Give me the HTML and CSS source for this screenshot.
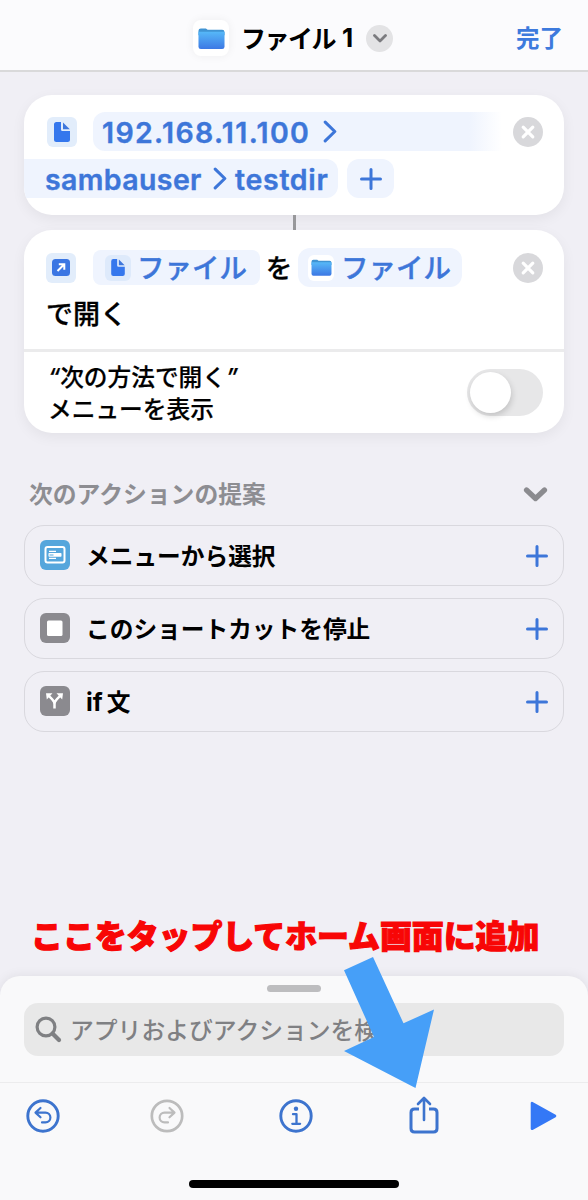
FILE: index.html
```html
<!DOCTYPE html>
<html lang="ja">
<head>
<meta charset="utf-8">
<title>ファイル 1</title>
<link rel="stylesheet" href="styles.css">
</head>
<body>
<svg class="defs" width="0" height="0" aria-hidden="true">
  <defs>
    <linearGradient id="folder-fill" x1="0" y1="0" x2="0" y2="1">
      <stop offset="0" stop-color="#56b8f8"/><stop offset="1" stop-color="#3d78e4"/>
    </linearGradient>
    <symbol id="folder" viewBox="0 0 28 23">
      <path d="M.5 3.500Q.5 1 3 1h5.200l1.800 1.500h15q2.500 0 2.500 2.500V8H.5z" fill="#4094d3"/>
      <path d="M.5 4.500h27V20q0 2.500-2.500 2.500H3Q.5 22.500.5 20z" fill="url(#folder-fill)"/>
    </symbol>
    <symbol id="doc" viewBox="0 0 16 20">
      <path d="M2.500 0H7v7.500Q7 9 8.500 9H16v8.500q0 2.500-2.500 2.500h-11Q0 20 0 17.500v-15Q0 0 2.500 0z" fill="#3577ed"/>
      <path d="M9 .5 15.800 7.300H9z" fill="#3e77dc"/>
    </symbol>
    <symbol id="close" viewBox="0 0 30 30">
      <circle cx="15" cy="15" r="15" fill="#d8d8db"/>
      <path d="M10.200 10.200l9.600 9.600m0-9.600-9.600 9.600" stroke="#fff" stroke-width="3.200" stroke-linecap="round"/>
    </symbol>
    <symbol id="plus" viewBox="0 0 22 22">
      <path d="M11 1.500v19M1.500 11h19" stroke="#3d76d9" stroke-width="3" stroke-linecap="round"/>
    </symbol>
    <symbol id="gt" viewBox="0 0 14 24">
      <path d="M2 2.200l10 9.800L2 21.800" fill="none" stroke="#3d76d9" stroke-width="3.200" stroke-linecap="round" stroke-linejoin="round"/>
    </symbol>
  </defs>
</svg>

<div class="screen">
  <header class="header">
    <div class="header-title">
      <span class="app-icon"><svg width="27" height="23"><use href="#folder"/></svg></span>
      <h1 class="title">ファイル<span class="title-num">1</span></h1>
      <span class="title-menu"><svg width="14" height="9" viewBox="0 0 14 9"><path d="M1.500 1.500 7 7l5.500-5.500" fill="none" stroke="#7b7b7f" stroke-width="2.800" stroke-linecap="round" stroke-linejoin="round"/></svg></span>
    </div>
    <a class="done">完了</a>
  </header>

  <main class="editor">
    <section class="card path-card">
      <div class="path-row">
        <span class="tile"><svg width="16" height="20"><use href="#doc"/></svg></span>
        <span class="chip chip-open"><span class="latin ip">192.168.11.100</span><svg width="14" height="23"><use href="#gt"/></svg></span>
        <svg class="close" width="30" height="30"><use href="#close"/></svg>
      </div>
      <div class="path-row second">
        <span class="chip chip-end"><span class="latin user">sambauser</span><svg width="14" height="23"><use href="#gt"/></svg><span class="latin dir">testdir</span></span>
        <span class="chip chip-plus"><svg width="22" height="22"><use href="#plus"/></svg></span>
      </div>
    </section>
    <div class="connector"></div>
    <section class="card open-card">
      <div class="open-row">
        <span class="tile"><svg width="18" height="17" viewBox="0 0 18 17"><rect width="18" height="17" rx="3.500" fill="#3b76e3"/><path d="M5.500 12 11.500 6M6.800 5.200h5.500v5.500" fill="none" stroke="#fff" stroke-width="2"/></svg></span>
        <span class="chip chip-file"><span class="mini mini-doc"><svg width="14" height="17"><use href="#doc"/></svg></span><span class="var">ファイル</span></span>
        <span class="particle">を</span>
        <span class="chip chip-app"><span class="mini mini-app"><svg width="21" height="17"><use href="#folder"/></svg></span><span class="var">ファイル</span></span>
        <svg class="close" width="30" height="30"><use href="#close"/></svg>
      </div>
      <div class="open-tail">で開く</div>
      <div class="option">
        <p class="option-label"><span class="quote">“</span>次の方法で開く<span class="quote">”</span><br>メニューを表示</p>
        <span class="toggle"><span class="knob"></span></span>
      </div>
    </section>

    <div class="suggest-head">
      <h2 class="suggest-title">次のアクションの提案</h2>
      <svg width="25" height="17" viewBox="0 0 25 17"><path d="M3.500 5 12.500 13.500 21.500 5" fill="none" stroke="#8b8b8f" stroke-width="5.200" stroke-linecap="round" stroke-linejoin="round"/></svg>
    </div>
    <ul class="suggestions">
      <li class="suggestion">
        <svg width="30" height="30" viewBox="0 0 30 30"><rect width="30" height="30" rx="6" fill="#55a6dc"/><rect x="5.500" y="7" width="19" height="15.500" rx="2" fill="none" stroke="#fff" stroke-width="2"/><path d="M9 11.300h7M9 18.300h7" stroke="#fff" stroke-width="1.200"/><rect x="8.500" y="13" width="13" height="3.800" rx=".8" fill="#fff"/><path d="M9.500 15h4" stroke="#55a6dc" stroke-width="1"/></svg>
        <span class="suggestion-name">メニューから選択</span>
        <svg class="add" width="22" height="22"><use href="#plus"/></svg>
      </li>
      <li class="suggestion">
        <svg width="30" height="30" viewBox="0 0 30 30"><rect width="30" height="30" rx="6" fill="#8b8a8f"/><rect x="7" y="7.500" width="15.500" height="15.500" rx="1.500" fill="#fff"/></svg>
        <span class="suggestion-name">このショートカットを停止</span>
        <svg class="add" width="22" height="22"><use href="#plus"/></svg>
      </li>
      <li class="suggestion">
        <svg width="30" height="30" viewBox="0 0 30 30"><rect width="30" height="30" rx="6" fill="#8b8a8f"/><path d="M14.500 22.500V18q0-2.500-2-4.300L9 10m5.500 8q0-2.500 2-4.300L20 10" fill="none" stroke="#fff" stroke-width="2.500"/><path d="M6 7.200h6.500l-5.700 6.300zM23 7.200h-6.500l5.700 6.300z" fill="#fff"/></svg>
        <span class="suggestion-name"><span class="if">if</span>文</span>
        <svg class="add" width="22" height="22"><use href="#plus"/></svg>
      </li>
    </ul>
    <p class="callout">ここをタップしてホーム画面に追加</p>
  </main>

  <section class="sheet">
    <div class="grabber"></div>
    <div class="search">
      <svg width="27" height="27" viewBox="0 0 27 27"><circle cx="11" cy="11" r="8.900" fill="none" stroke="#7f8083" stroke-width="3.200"/><path d="M17.500 17.500 24 24" stroke="#7f8083" stroke-width="4.200" stroke-linecap="round"/></svg>
      <span class="placeholder">アプリおよびアクションを検索</span>
    </div>
  </section>
  <nav class="toolbar">
    <svg class="undo" width="34" height="34" viewBox="0 0 34 34" fill="none" stroke="#3d74ce" stroke-linecap="round" stroke-linejoin="round"><circle cx="17" cy="17" r="15.200" stroke-width="2.900"/><path d="M14.500 9 9.500 13.600l5 4.700M10 13.600h9.500a4.900 4.900 0 0 1 0 9.800H16" stroke-width="2.200"/></svg>
    <svg class="redo" width="34" height="34" viewBox="0 0 34 34" fill="none" stroke="#bcbcbc" stroke-linecap="round" stroke-linejoin="round"><circle cx="17" cy="17" r="15.200" stroke-width="2.700"/><path d="M19.500 9l5 4.600-5 4.700M24 13.600h-9.500a4.900 4.900 0 0 0 0 9.800H18" stroke-width="2.200"/></svg>
    <svg class="info" width="34" height="34" viewBox="0 0 34 34" fill="none" stroke="#3d74ce" stroke-linecap="round" stroke-linejoin="round"><circle cx="17" cy="17" r="15.200" stroke-width="2.900"/><circle cx="17" cy="9.800" r="2.200" fill="#3d74ce" stroke="none"/><path d="M14 15.200h3.500v9.500M13.300 24.800h7.800" stroke-width="2.300"/></svg>
    <svg class="share" width="30" height="38" viewBox="0 0 30 38" fill="none" stroke="#3d74ce" stroke-linecap="round" stroke-linejoin="round"><path d="M10 13H5.500Q2 13 2 16.500v16Q2 36 5.500 36h19q3.500 0 3.500-3.500v-16Q28 13 24.500 13H20" stroke-width="3" stroke-linecap="butt"/><path d="M15 24V2.500M9 8l6-6 6 6" stroke-width="2.600"/></svg>
    <svg class="play" width="27" height="30" viewBox="0 0 27 30"><path d="M2 2.200v25.600L25 15z" fill="#3478f6" stroke="#3478f6" stroke-width="2.600" stroke-linejoin="round"/></svg>
  </nav>
  <div class="home"><span class="home-bar"></span></div>
  <svg class="pointer" width="90" height="131" viewBox="0 0 90 131"><path d="M0 13.300 29 0 59.500 66.300 90 52.500 71.500 131 0 94 30 80z" fill="#469ff8"/></svg>
</div>
</body>
</html>
```

FILE: styles.css
```css
* { box-sizing: border-box; }
body {
  margin: 0;
  font-family: Inter, "Noto Sans CJK JP", sans-serif;
  color: #000;
  background: #f0eff5;
}
h1, h2, p, ul { margin: 0; padding: 0; }
svg { display: block; flex: none; }
.defs { position: absolute; }
.screen {
  position: relative;
  display: flex;
  flex-direction: column;
  width: 588px;
  height: 1200px;
  overflow: hidden;
  background: #f0eff5;
  white-space: nowrap;
}

.header {
  display: flex;
  justify-content: space-between;
  height: 72px;
  flex: none;
  padding: 20px 25px 0 193px;
  background: #fbfbfd;
  border-bottom: 2px solid #d9d9da;
}
.header-title { display: flex; height: 36px; align-items: center; }
.app-icon {
  display: grid;
  place-items: center;
  width: 36px;
  height: 36px;
  border-radius: 8px;
  background: #fff;
  box-shadow: 0 0 10px rgba(0, 0, 0, .06);
}
.title { display: flex; margin: -1px 0 0 12px; width: 125px; font: 700 25px/36px "Noto Sans CJK JP", sans-serif; letter-spacing: -1.500px; }
.title-num { margin: 1px 0 0 7px; font-family: Inter, sans-serif; font-size: 26px; letter-spacing: 0; }
.title-menu { display: grid; place-items: center; width: 27px; height: 27px; border-radius: 50%; background: #e3e3e5; }
.done { margin-top: -1px; font: 700 23.500px/36px "Noto Sans CJK JP", sans-serif; color: #3d7add; }

.editor { height: 904px; flex: none; padding: 23px 24px 0; }
.card { background: #fff; border-radius: 28px; box-shadow: 0 4px 14px rgba(0, 0, 0, .06); overflow: hidden; }
.path-card { height: 120px; padding-top: 17px; }
.path-row { display: flex; align-items: center; height: 39px; padding: 0 21px 0 23px; }
.path-row.second { margin-top: 8px; padding: 0; }
.tile { display: grid; place-items: center; width: 30px; height: 30px; border-radius: 6px; background: #e2edfb; }
.close { margin-left: auto; }
.chip { display: flex; align-items: center; height: 39px; background: #eff4fe; color: #3d76d9; }
.chip-open { width: 409px; margin-left: 16px; padding-left: 9px; border-radius: 12px 0 0 12px; background: linear-gradient(90deg, #eff4fe 92%, #fff); }
.latin { flex: none; margin-top: 2px; font: 600 28.500px/39px Inter, sans-serif; -webkit-text-stroke: .4px; }
.ip { width: 221px; letter-spacing: 1.350px; }
.chip-end { width: 314px; padding-left: 21px; border-radius: 0 12px 12px 0; }
.user { width: 168px; letter-spacing: .38px; }
.dir { margin-left: 8px; letter-spacing: .7px; }
.chip-plus { width: 47px; margin-left: 9px; justify-content: center; border-radius: 12px; }
.connector { width: 3px; height: 15px; margin-left: 269px; background: #98989b; }

.open-card { height: 203px; }
.open-row { display: flex; align-items: center; height: 39px; margin-top: 18px; padding: 0 21px 0 22px; }
.chip-file { width: 167px; height: 35px; margin-left: 17px; padding-left: 12px; border-radius: 8px; }
.chip-app { width: 164px; padding-left: 10px; border-radius: 12px; }
.mini { display: grid; place-items: center; width: 26px; height: 26px; border-radius: 6px; }
.mini-doc { background: #deeafb; }
.mini-app { background: #fff; }
.var { margin: -3px 0 0 6px; font: 500 27.500px/36px "Noto Sans CJK JP", sans-serif; -webkit-text-stroke: .4px; }
.chip-app .var { margin-left: 7px; }
.particle { width: 38px; margin-top: -2px; text-align: center; font: 500 26.500px/38px "Noto Sans CJK JP", sans-serif; -webkit-text-stroke: .3px; }
.open-tail { height: 62px; padding: 7px 0 0 22px; font: 500 27px/38px "Noto Sans CJK JP", sans-serif; -webkit-text-stroke: .3px; }
.option { display: flex; justify-content: space-between; height: 84px; padding: 8px 21px 0 24px; border-top: 3px solid #ebebec; }
.option-label { font: 500 23.700px/32px "Noto Sans CJK JP", sans-serif; -webkit-text-stroke: .2px; }
.quote { font-family: Inter, sans-serif; font-style: italic; line-height: 1; }
.toggle { width: 76px; height: 47px; margin-top: 9px; padding: 3px; border-radius: 24px; background: #e7e7e8; }
.knob { display: block; width: 41px; height: 41px; border-radius: 50%; background: #fff; box-shadow: 1px 3px 6px rgba(0, 0, 0, .16); }

.suggest-head { display: flex; align-items: center; justify-content: space-between; height: 36px; margin-top: 42px; padding: 0 16px 0 5px; }
.suggest-title { margin-top: 0; font: 700 23.800px/36px "Noto Sans CJK JP", sans-serif; color: #8d8d92; }
.suggestions { display: flex; flex-direction: column; gap: 12px; margin-top: 14px; list-style: none; }
.suggestion { display: flex; align-items: center; height: 61px; padding: 0 15px; border: 1.500px solid #d9d8de; border-radius: 20px; }
.suggestion > svg:first-child { margin-top: -1px; }
.suggestion-name { margin: -1px 0 0 16px; font: 700 23.700px/36px "Noto Sans CJK JP", sans-serif; }
.if { margin-right: 4px; font-family: Inter, sans-serif; font-size: 25px; line-height: 1; }
.suggestion > .add { margin: 0 0 0 auto; }
.callout { margin: 179px 0 0 7px; font: 900 31.900px/46px "Noto Sans CJK JP", sans-serif; color: #f80606; -webkit-text-stroke: 1.200px #f80606; }

.sheet { height: 107px; flex: none; padding: 9px 24px 0; background: #f9f9fa; border-radius: 20px 20px 0 0; border-bottom: 1px solid #ececed; box-shadow: 0 0 12px rgba(0, 0, 0, .08); }
.grabber { width: 54px; height: 7px; margin: 0 auto; border-radius: 4px; background: #bdbdbf; }
.search { display: flex; align-items: center; height: 53px; margin-top: 11px; padding-left: 11px; border-radius: 14px; background: #e8e8e8; }
.placeholder { margin: -1px 0 0 8px; font: 500 23.800px/36px "Noto Sans CJK JP", sans-serif; color: #7f8083; }
.toolbar { display: flex; align-items: flex-start; height: 87px; flex: none; padding: 16px 0 0 26px; background: #f9f9fa; position: relative; }
.redo { margin-left: 90px; }
.info { margin-left: 95px; }
.share { margin: -3px 0 0 96px; }
.play { margin: 2px 0 0 91px; }
.home { height: 30px; flex: none; padding-top: 10px; background: #f9f9fa; }
.home-bar { display: block; width: 210px; height: 8px; margin: 0 auto; border-radius: 4px; background: #000; }
.pointer { position: absolute; left: 344px; top: 957px; }
```
